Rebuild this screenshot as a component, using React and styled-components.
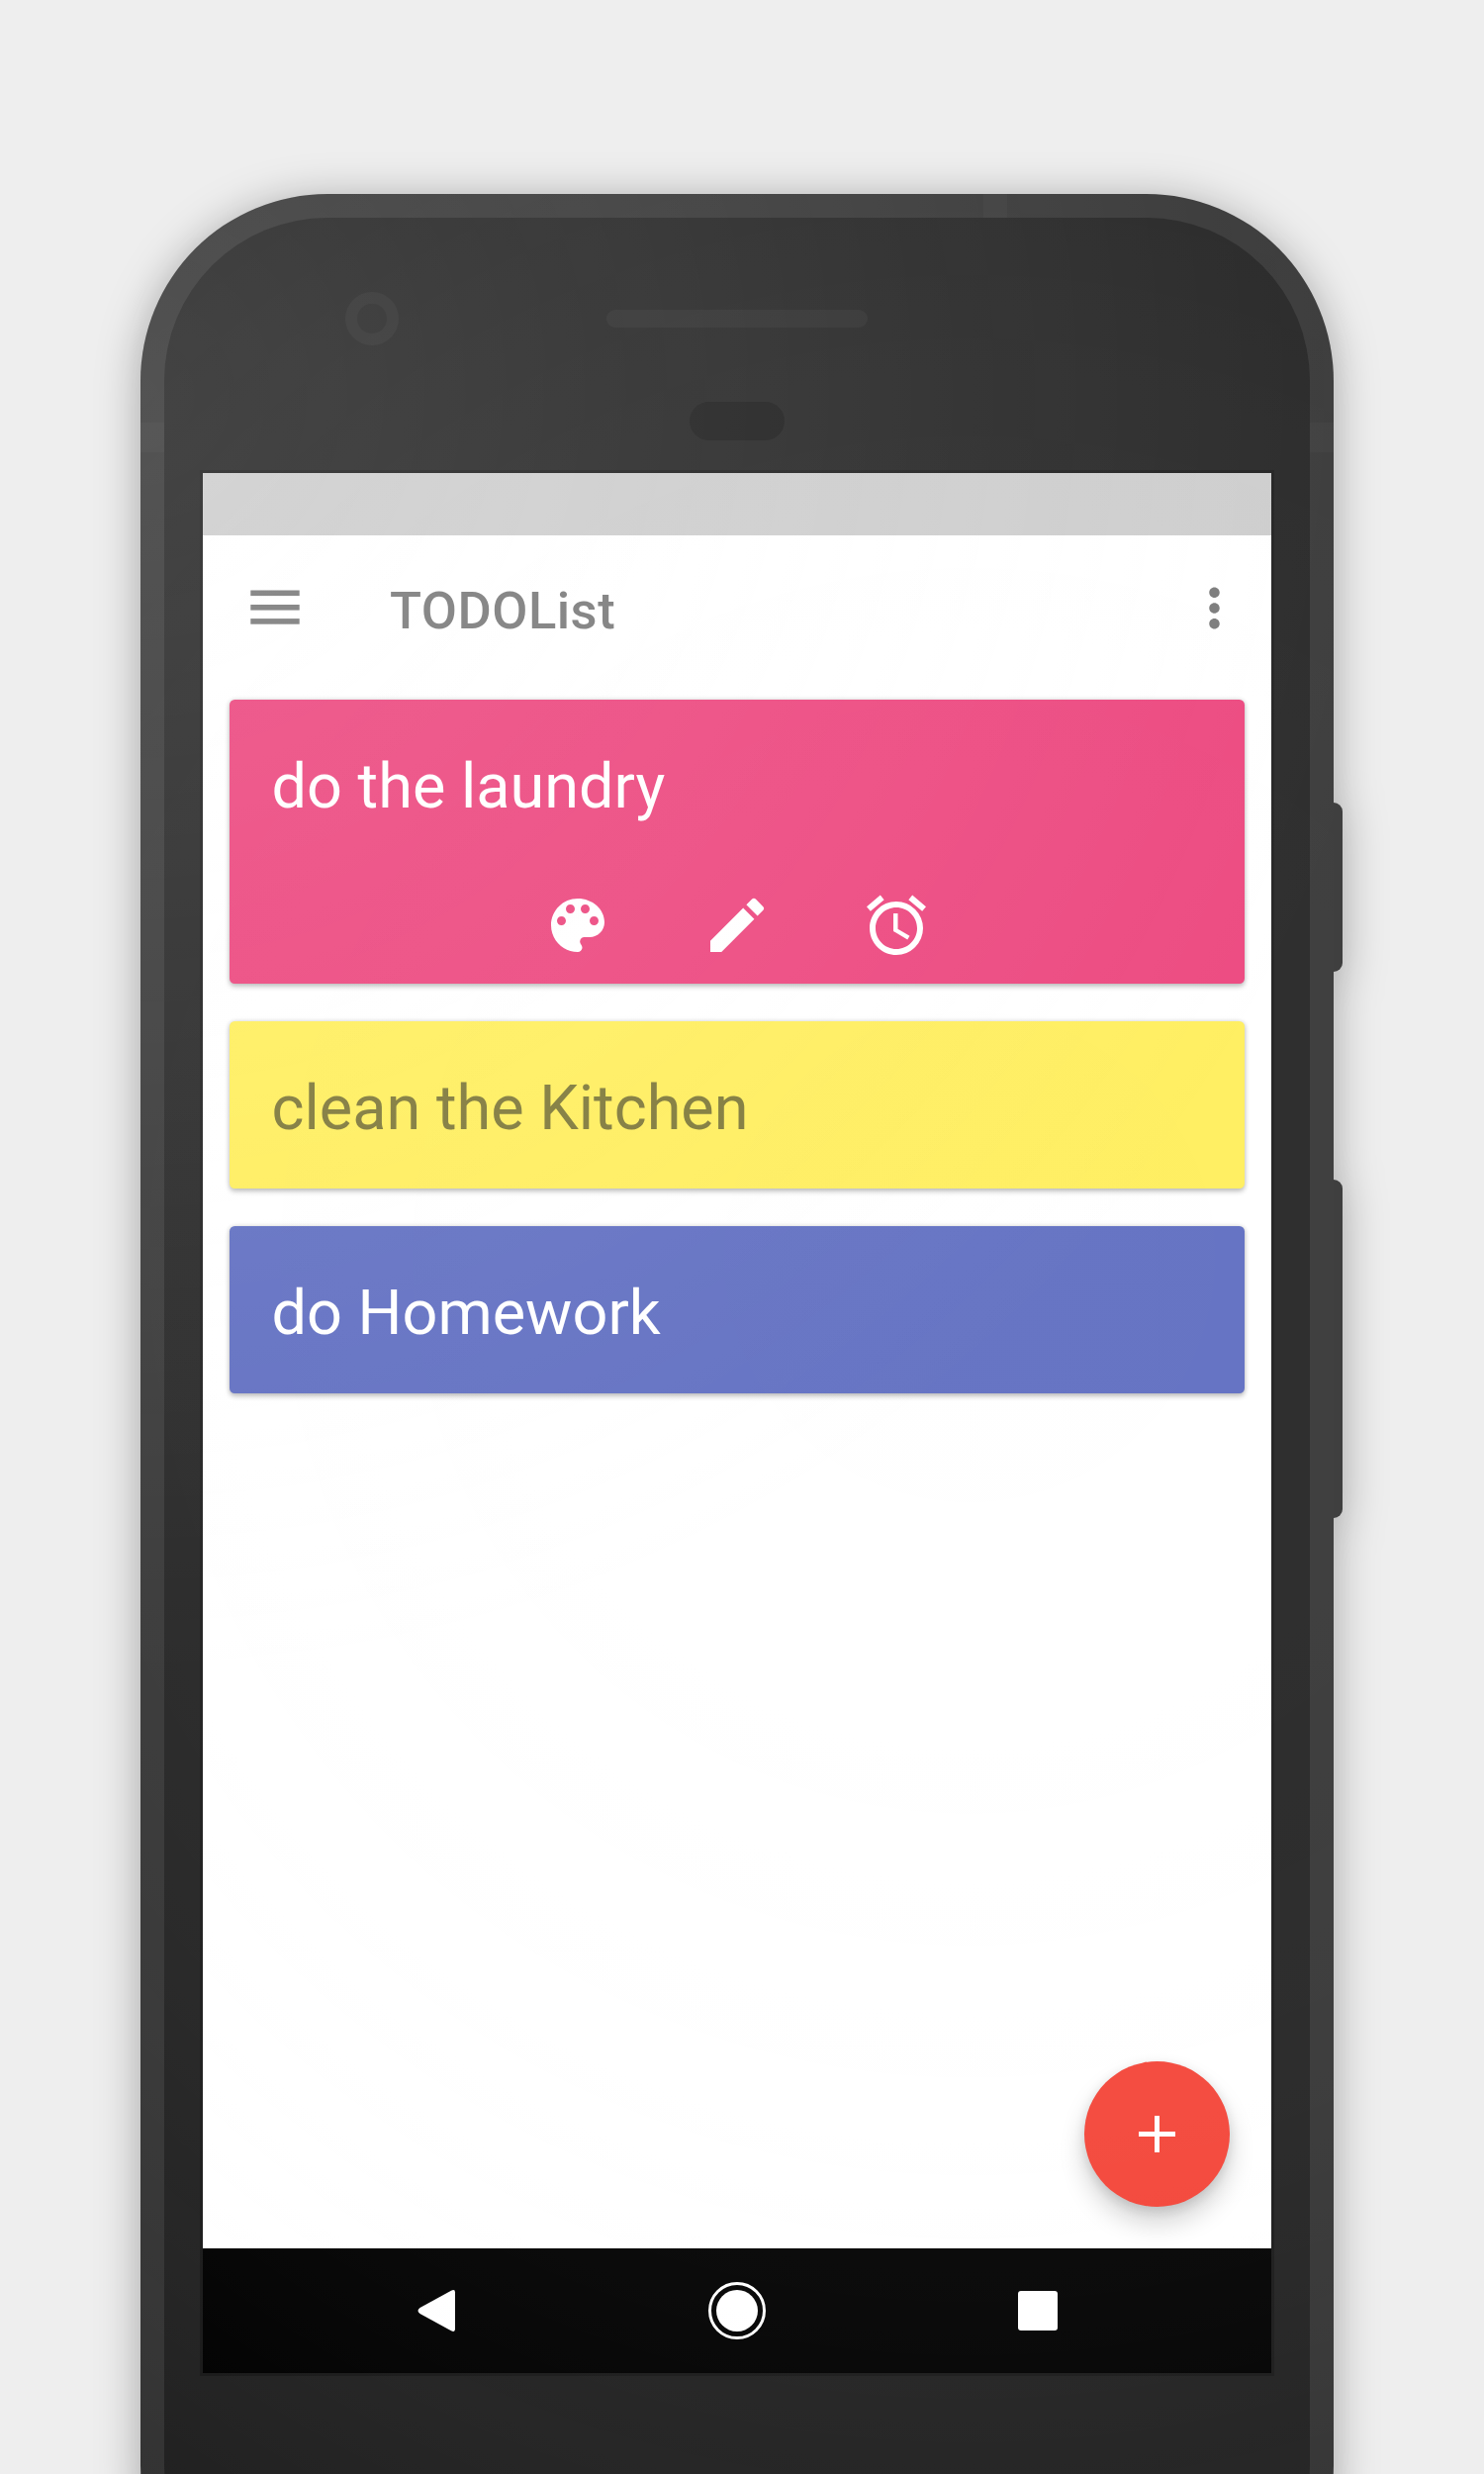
import React from "react";
import styled, { createGlobalStyle } from "styled-components";
import { MdEdit, MdAccessAlarm, MdMoreVert } from "react-icons/md";

const GlobalStyle = createGlobalStyle`
  html, body { margin: 0; padding: 0; background: #eeeeee; }
  *, *::before, *::after { box-sizing: border-box; }
`;

const Stage = styled.main`
  width: 1500px;
  height: 2500px;
  overflow: hidden;
  padding: 196px 0 0 142px;
  background: #eeeeee;
  font-family: Roboto, "Noto Sans", sans-serif;
`;

const Phone = styled.div`
  position: relative;
  width: 1206px;
  height: 2484px;
  filter: drop-shadow(0 6px 22px rgba(0, 0, 0, 0.31));
`;

const Frame = styled.div`
  height: 100%;
  padding: 24px;
  border-radius: 189px;
  background: #333333;
`;

const Face = styled.div`
  height: 100%;
  border-radius: 165px;
  background: #212121;
  display: flex;
  flex-direction: column;
  align-items: center;
`;

const AntennaBand = styled.span`
  position: absolute;
  left: ${(p) => p.$x}px;
  top: ${(p) => p.$y}px;
  width: 24px;
  height: ${(p) => p.$h}px;
  background: rgba(255, 255, 255, 0.025);
`;

const SideButton = styled.span`
  position: absolute;
  left: 1206px;
  top: ${(p) => p.$y}px;
  width: 9px;
  height: ${(p) => p.$h}px;
  border-radius: 0 9px 9px 0;
  background: #3f3f3f;
`;

const Forehead = styled.header`
  width: 1086px;
  height: 255px;
  display: grid;
  grid-template-columns: 1fr 264px 1fr;
  grid-template-rows: 54px 39px;
  row-gap: 57px;
  align-items: center;
  padding-top: 75px;
`;

const Camera = styled.span`
  justify-self: start;
  margin-left: 147px;
  width: 54px;
  height: 54px;
  border: 12px solid rgba(255, 255, 255, 0.035);
  border-radius: 50%;
  background: rgba(255, 255, 255, 0.006);
`;

const Speaker = styled.span`
  height: 18px;
  border-radius: 9px;
  background: rgba(255, 255, 255, 0.04);
`;

const Sensor = styled.span`
  grid-column: 2;
  justify-self: center;
  width: 96px;
  height: 39px;
  border-radius: 20px;
  background: rgba(0, 0, 0, 0.26);
`;

const Display = styled.section`
  width: 1086px;
  height: 1926px;
  border: 3px solid #191919;
  background: #ffffff;
  display: flex;
  flex-direction: column;
`;

const StatusBar = styled.div`
  height: 63px;
  flex: none;
  background: #cccccc;
`;

const Toolbar = styled.div`
  height: 147px;
  flex: none;
  display: flex;
  align-items: center;
  padding: 0 26px 0 48px;
  color: #757575;
`;

const MenuButton = styled.button`
  display: flex;
  padding: 0;
  border: 0;
  margin-bottom: 2px;
  background: none;
  color: inherit;
`;

const Title = styled.h1`
  margin: 5px auto 0 91px;
  font-size: 52.5px;
  line-height: 62px;
  font-weight: 500;
  letter-spacing: 0.5px;
`;

const MoreButton = styled(MenuButton)`
  margin-bottom: 0;
`;

const TaskList = styled.ul`
  flex: 1;
  margin: 0;
  padding: 19px 27px 0;
  list-style: none;
  display: flex;
  flex-direction: column;
  gap: 38px;
`;

const Task = styled.li`
  height: ${(p) => (p.$open ? 287 : 169)}px;
  padding: 51px 42.5px 0;
  border-radius: 5.25px;
  background: ${(p) => p.$color};
  color: ${(p) => p.$ink};
  box-shadow: 0 2.6px 5px rgba(0, 0, 0, 0.24), 0 0 5px rgba(0, 0, 0, 0.12);
`;

const TaskLabel = styled.p`
  margin: 0;
  font-size: 63px;
  line-height: 74px;
  white-space: nowrap;
`;

const Actions = styled.div`
  display: flex;
  justify-content: center;
  gap: 89px;
  margin-top: 67px;
`;

const ComposeButton = styled.button`
  position: absolute;
  left: 954px;
  top: 1887px;
  width: 147px;
  height: 147px;
  padding: 0;
  border: 0;
  border-radius: 50%;
  background: #f44336;
  display: grid;
  place-items: center;
  box-shadow: 0 16px 26px rgba(0, 0, 0, 0.18), 0 4px 12px rgba(0, 0, 0, 0.13);
`;

const NavBar = styled.nav`
  height: 126px;
  flex: none;
  display: flex;
  justify-content: center;
  align-items: center;
  background: #000000;
`;

const NavIcon = styled.svg`
  width: 60px;
  height: 60px;
  margin: 0 122px;
  fill: #ffffff;
`;

const Sheen = styled.div`
  position: absolute;
  inset: 0;
  border-radius: 189px;
  background:
    radial-gradient(circle 1300px at 0 204px, rgba(255, 255, 255, 0.13), rgba(255, 255, 255, 0)),
    radial-gradient(
      circle 1600px at 838px 1074px,
      rgba(255, 255, 255, 0.072),
      rgba(255, 255, 255, 0.068) 31%,
      rgba(255, 255, 255, 0.053) 56%,
      rgba(255, 255, 255, 0.044) 68%,
      rgba(255, 255, 255, 0.026) 79%,
      rgba(255, 255, 255, 0.008) 91%,
      rgba(255, 255, 255, 0)
    );
  pointer-events: none;
`;

const tasks = [
  { label: "do the laundry", color: "#ec407a", ink: "#ffffff", open: true },
  { label: "clean the Kitchen", color: "#ffee58", ink: "#7a7432" },
  { label: "do Homework", color: "#5c6bc0", ink: "#ffffff" },
];

const MenuIcon = () => (
  <svg width="50" height="36" viewBox="0 0 50 36" fill="currentColor">
    <rect x="0.3" y="0.5" width="49.4" height="5.6" />
    <rect x="0.3" y="15" width="49.4" height="5.6" />
    <rect x="0.3" y="29.1" width="49.4" height="5.6" />
  </svg>
);

const PaletteIcon = () => (
  <svg width="72" height="72" viewBox="0 0 24 24" fill="currentColor">
    <path d="M12 3c-4.97 0-9 4.03-9 9s4.03 9 9 9c.83 0 1.5-.67 1.5-1.5 0-.39-.15-.74-.39-1.01-.23-.26-.38-.61-.38-.99 0-.83.67-1.5 1.5-1.5H16c2.76 0 5-2.24 5-5 0-4.42-4.03-8-9-8zm-5.5 9c-.83 0-1.5-.67-1.5-1.5S5.67 9 6.5 9 8 9.67 8 10.5 7.33 12 6.5 12zm3-4C8.67 8 8 7.33 8 6.5S8.67 5 9.5 5s1.5.67 1.5 1.5S10.33 8 9.5 8zm5 0c-.83 0-1.5-.67-1.5-1.5S13.67 5 14.5 5s1.5.67 1.5 1.5S15.33 8 14.5 8zm3 4c-.83 0-1.5-.67-1.5-1.5S16.67 9 17.5 9s1.5.67 1.5 1.5-.67 1.5-1.5 1.5z" />
  </svg>
);

export default function App() {
  return (
    <Stage>
      <GlobalStyle />
      <Phone>
        <SideButton $y={615} $h={171} />
        <SideButton $y={996} $h={342} />
        <Frame>
          <Face>
            <Forehead>
              <Camera />
              <Speaker />
              <Sensor />
            </Forehead>
            <Display>
              <StatusBar />
              <Toolbar>
                <MenuButton aria-label="Menu">
                  <MenuIcon />
                </MenuButton>
                <Title>TODOList</Title>
                <MoreButton aria-label="More">
                  <MdMoreVert size={63} />
                </MoreButton>
              </Toolbar>
              <TaskList>
                {tasks.map((t) => (
                  <Task key={t.label} $open={t.open} $color={t.color} $ink={t.ink}>
                    <TaskLabel>{t.label}</TaskLabel>
                    {t.open && (
                      <Actions>
                        <PaletteIcon />
                        <MdEdit size={72} />
                        <MdAccessAlarm size={72} />
                      </Actions>
                    )}
                  </Task>
                ))}
              </TaskList>
              <NavBar>
                <NavIcon viewBox="0 0 60 60">
                  <path d="M13.5 27 45 9.8Q49 7.8 49 11.5V48.5Q49 52.2 45 50.2L13.5 33Q9.5 30 13.5 27Z" />
                </NavIcon>
                <NavIcon viewBox="0 0 60 60">
                  <circle cx="30" cy="30" r="27.5" fill="none" stroke="#ffffff" strokeWidth="3" />
                  <circle cx="30" cy="30" r="21" />
                </NavIcon>
                <NavIcon viewBox="0 0 60 60">
                  <rect x="10" y="10" width="40" height="40" rx="3" />
                </NavIcon>
              </NavBar>
            </Display>
          </Face>
        </Frame>
        <ComposeButton aria-label="Add">
          <svg width="37" height="37" viewBox="0 0 37 37" fill="#ffffff">
            <path d="M16 0h5v16h16v5H21v16h-5V21H0v-5h16z" />
          </svg>
        </ComposeButton>
        <Sheen />
        <AntennaBand $x={0} $y={231} $h={30} />
        <AntennaBand $x={1182} $y={231} $h={30} />
        <AntennaBand $x={852} $y={0} $h={24} />
      </Phone>
    </Stage>
  );
}
